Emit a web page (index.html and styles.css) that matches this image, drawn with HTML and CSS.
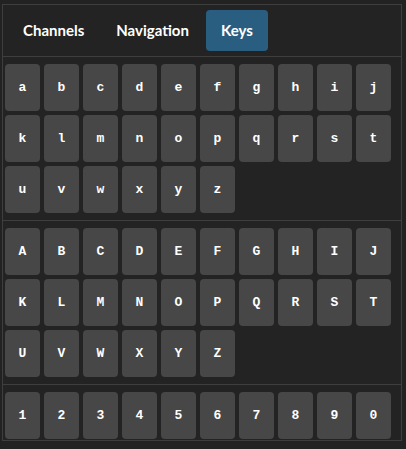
FILE: index.html
```html
<!DOCTYPE html>
<html>
<head>
<meta charset="utf-8">
<link rel="stylesheet" href="styles.css">
</head>
<body>
<div class="panel">
  <div class="tabs">
    <div class="tab">Channels</div>
    <div class="tab">Navigation</div>
    <div class="tab active">Keys</div>
  </div>
  <div class="section">
    <div class="key">a</div><div class="key">b</div><div class="key">c</div><div class="key">d</div><div class="key">e</div><div class="key">f</div><div class="key">g</div><div class="key">h</div><div class="key">i</div><div class="key">j</div>
    <div class="key">k</div><div class="key">l</div><div class="key">m</div><div class="key">n</div><div class="key">o</div><div class="key">p</div><div class="key">q</div><div class="key">r</div><div class="key">s</div><div class="key">t</div>
    <div class="key">u</div><div class="key">v</div><div class="key">w</div><div class="key">x</div><div class="key">y</div><div class="key">z</div>
  </div>
  <div class="section">
    <div class="key">A</div><div class="key">B</div><div class="key">C</div><div class="key">D</div><div class="key">E</div><div class="key">F</div><div class="key">G</div><div class="key">H</div><div class="key">I</div><div class="key">J</div>
    <div class="key">K</div><div class="key">L</div><div class="key">M</div><div class="key">N</div><div class="key">O</div><div class="key">P</div><div class="key">Q</div><div class="key">R</div><div class="key">S</div><div class="key">T</div>
    <div class="key">U</div><div class="key">V</div><div class="key">W</div><div class="key">X</div><div class="key">Y</div><div class="key">Z</div>
  </div>
  <div class="section">
    <div class="key">1</div><div class="key">2</div><div class="key">3</div><div class="key">4</div><div class="key">5</div><div class="key">6</div><div class="key">7</div><div class="key">8</div><div class="key">9</div><div class="key">0</div>
  </div>
</div>
</body>
</html>
```
FILE: styles.css
```css
html, body {
  margin: 0;
  padding: 0;
  background: #222222;
}
.panel {
  box-sizing: border-box;
  margin: 4px 0 0 2px;
  width: 400px;
  height: 437px;
  border: 1px solid #3e3e3e;
  background: #232323;
  overflow: hidden;
}
.tabs {
  display: flex;
  gap: 2px;
  padding: 5px;
  border-bottom: 1px solid #3e3e3e;
}
.tab {
  height: 41px;
  line-height: 41px;
  padding: 0 15px;
  border-radius: 4px;
  font-family: Lato, "Liberation Sans", sans-serif;
  font-weight: bold;
  font-size: 15px;
  color: #ffffff;
}
.tab.active {
  background: #2a5e80;
}
.section {
  display: flex;
  flex-wrap: wrap;
  padding: 5px 0;
}
.section + .section {
  border-top: 1px solid #3e3e3e;
}
.key {
  width: 35px;
  height: 47px;
  margin: 2px;
  border-radius: 4px;
  background: #474747;
  color: #ffffff;
  font-family: "Courier New", "Liberation Mono", monospace;
  font-weight: bold;
  font-size: 13px;
  display: flex;
  align-items: center;
  justify-content: center;
}
```
